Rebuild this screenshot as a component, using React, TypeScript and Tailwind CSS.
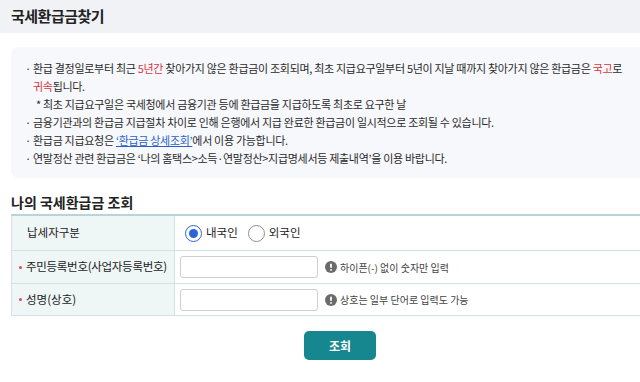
import React from "react";

const font = "font-['Noto_Sans_CJK_KR','Noto_Sans',sans-serif]";

const Info = () => (
  <svg width="12" height="12" viewBox="0 0 12 12" className="shrink-0">
    <circle cx="6" cy="6" r="6" fill="#6b6b6b" />
    <rect x="5.1" y="2.5" width="1.8" height="4.5" rx="0.9" fill="#fff" />
    <circle cx="6" cy="8.9" r="0.95" fill="#fff" />
  </svg>
);

const Radio = ({ on }: { on?: boolean }) => (
  <span
    className={`w-[17px] h-[17px] rounded-full border flex items-center justify-center bg-white ${
      on ? "border-[#2b66d9]" : "border-[#8f8f8f]"
    }`}
  >
    {on && <span className="w-[9px] h-[9px] rounded-full bg-[#2b66d9]" />}
  </span>
);

export default function App() {
  return (
    <div className={`w-[640px] h-[382px] bg-white overflow-hidden text-[#222] ${font}`}>
      <div className="h-[33px] bg-[#f1f2f6] flex items-center pl-[11px]">
        <h1 className="text-[15px] font-bold tracking-[-0.5px]">국세환급금찾기</h1>
      </div>

      <div className="ml-[11px] mt-[14px] h-[131px] bg-[#f7f8fc] rounded-l-[8px] pl-[14px] pr-[4px] pt-[12px] text-[11px] leading-[18px] tracking-[-0.3px] text-[#2a2a2a] break-keep">
        <ul>
          <li className="flex">
            <span className="w-[8px] shrink-0">·</span>
            <span>
              환급 결정일로부터 최근 <span className="text-[#d9363e]">5년간</span> 찾아가지 않은 환급금이 조회되며, 최초 지급요구일부터 5년이 지날 때까지 찾아가지 않은 환급금은{" "}
              <span className="text-[#d9363e]">국고</span>로 <span className="text-[#d9363e]">귀속</span>됩니다.
            </span>
          </li>
          <li className="pl-[11px]">* 최초 지급요구일은 국세청에서 금융기관 등에 환급금을 지급하도록 최초로 요구한 날</li>
          <li className="flex">
            <span className="w-[8px] shrink-0">·</span>
            <span>금융기관과의 환급금 지급절차 차이로 인해 은행에서 지급 완료한 환급금이 일시적으로 조회될 수 있습니다.</span>
          </li>
          <li className="flex">
            <span className="w-[8px] shrink-0">·</span>
            <span>
              환급금 지급요청은 <span className="text-[#2a62c9] underline">‘환급금 상세조회’</span>에서 이용 가능합니다.
            </span>
          </li>
          <li className="flex">
            <span className="w-[8px] shrink-0">·</span>
            <span>연말정산 관련 환급금은 ‘나의 홈택스&gt;소득·연말정산&gt;지급명세서등 제출내역’을 이용 바랍니다.</span>
          </li>
        </ul>
      </div>

      <h2 className="ml-[11px] mt-[12px] text-[14px] font-bold leading-[24px]">나의 국세환급금 조회</h2>

      <div className="ml-[11px] border-t-2 border-t-[#b9d3d6] text-[11.5px]">
        <div className="flex h-[35px] border-b border-[#d3e3e5]">
          <div className="w-[164px] bg-[#eef6f6] border-x border-[#d3e3e5] flex items-center pl-[15px]">납세자구분</div>
          <div className="flex items-center pl-[10px] gap-[4px]">
            <Radio on />
            <span>내국인</span>
            <span className="ml-[2px]" />
            <Radio />
            <span>외국인</span>
          </div>
        </div>
        <div className="flex h-[33px] border-b border-[#d3e3e5]">
          <div className="w-[164px] bg-[#eef6f6] border-x border-[#d3e3e5] flex items-center pl-[7px] whitespace-nowrap tracking-[-0.3px]">
            <span className="w-[3px] h-[3px] rounded-full bg-[#e0446a] mr-[4px]" />
            주민등록번호(사업자등록번호)
          </div>
          <div className="flex items-center pl-[5px]">
            <div className="w-[138px] h-[22px] border border-[#cfcfcf] rounded-[3px] bg-white" />
            <div className="flex items-center gap-[3px] ml-[7px] text-[10px] text-[#444]">
              <Info />
              <span>하이픈(-) 없이 숫자만 입력</span>
            </div>
          </div>
        </div>
        <div className="flex h-[32px] border-b border-[#d3e3e5]">
          <div className="w-[164px] bg-[#eef6f6] border-x border-[#d3e3e5] flex items-center pl-[7px]">
            <span className="w-[3px] h-[3px] rounded-full bg-[#e0446a] mr-[4px]" />
            성명(상호)
          </div>
          <div className="flex items-center pl-[5px]">
            <div className="w-[138px] h-[22px] border border-[#cfcfcf] rounded-[3px] bg-white" />
            <div className="flex items-center gap-[3px] ml-[7px] text-[10px] text-[#444]">
              <Info />
              <span>상호는 일부 단어로 입력도 가능</span>
            </div>
          </div>
        </div>
      </div>

      <div className="flex justify-center mt-[15px] pl-[40px]">
        <button className="w-[72px] h-[29px] rounded-[5px] bg-[#17878f] text-white text-[12px] font-bold">조회</button>
      </div>
    </div>
  );
}
